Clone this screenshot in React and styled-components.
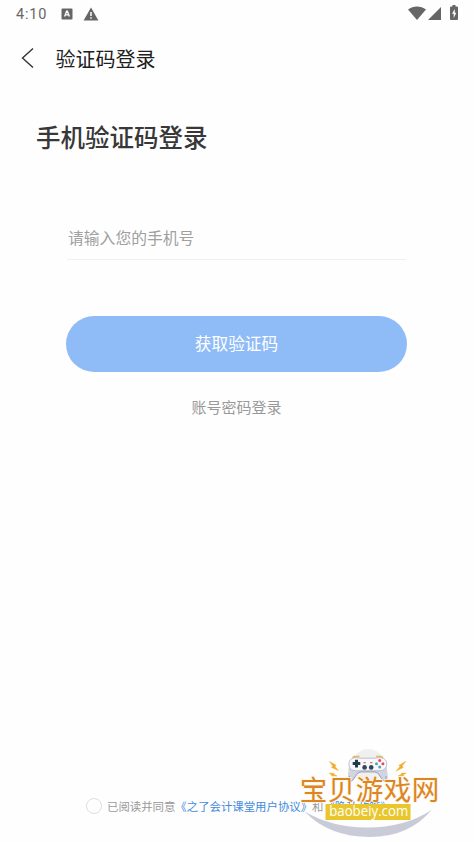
import React from "react";
import styled, { createGlobalStyle } from "styled-components";

const GlobalStyle = createGlobalStyle`
  * { box-sizing: border-box; }
  body { margin: 0; background: #fefefe; }
  button { border: 0; padding: 0; background: none; font: inherit; color: inherit; }
`;

const Screen = styled.div`
  position: relative;
  display: flex;
  flex-direction: column;
  width: 474px;
  height: 842px;
  overflow: hidden;
  background: #fefefe;
  font-family: "Noto Sans CJK SC", sans-serif;
`;

const StatusBar = styled.header`
  display: flex;
  justify-content: space-between;
  height: 28px;
  padding: 0 16px;
  color: #666;
`;

const StatusGroup = styled.div`
  display: flex;
  align-items: center;
  height: 28px;
`;

const Clock = styled.span`
  width: 45px;
  padding-top: 2px;
  font: 400 14.5px/28px Roboto, sans-serif;
  letter-spacing: 0.8px;
  color: #666;
`;

const NavBar = styled.nav`
  display: flex;
  align-items: center;
  gap: 19.5px;
  height: 60px;
  padding-left: 20px;
`;

const BackButton = styled.button`
  display: flex;
`;

const NavTitle = styled.span`
  padding-top: 2px;
  font-size: 20px;
  line-height: 30px;
  color: #202020;
`;

const Heading = styled.h1`
  margin: 31px 0 0 36px;
  font-size: 24.5px;
  line-height: 36px;
  font-weight: 500;
  color: #383838;
`;

const Form = styled.main`
  display: flex;
  flex-direction: column;
  align-items: center;
  margin: 61px 67px 0 66px;
`;

const PhoneField = styled.label`
  width: 339px;
  height: 44px;
  padding-left: 1px;
  border-bottom: 1px solid #f0f0f0;
  font-size: 15.8px;
  line-height: 43px;
  color: #a0a0a0;
`;

const SubmitButton = styled.button`
  width: 341px;
  height: 56px;
  margin-top: 56px;
  border-radius: 28px;
  background: #8fbcf7;
  font-size: 16.7px;
  line-height: 54px;
  padding-bottom: 2px;
  color: #fff;
`;

const PasswordLogin = styled.button`
  margin-top: 23px;
  font-size: 15px;
  line-height: 24px;
  color: #999;
`;

const Agreement = styled.footer`
  display: flex;
  align-items: center;
  height: 20px;
  margin: auto 0 26px 86px;
  font-size: 11.4px;
  line-height: 20px;
  white-space: nowrap;
  color: #999;
`;

const Radio = styled.span`
  width: 16px;
  height: 16px;
  margin-right: 5px;
  border: 1px solid #dedede;
  border-radius: 50%;
`;

const PolicyLink = styled.span`
  color: #438bdb;
`;

const SiteBadge = styled.svg`
  position: absolute;
  left: 290px;
  top: 740px;
`;

const LetterIcon = () => (
  <svg width="12" height="12" viewBox="0 0 12 12">
    <rect x="0.5" y="0.5" width="11" height="11" rx="1" fill="#666" />
    <path d="M3.6 8.5 5.6 3.2h.8l2 5.3M4.4 6.8h3.2" fill="none" stroke="#fff" strokeWidth="1.3" />
  </svg>
);

const WarningIcon = () => (
  <svg width="16" height="14" viewBox="0 0 16 14">
    <path d="M8 0.5 15.4 13.5H0.6Z" fill="#666" />
    <path d="M8 5v4M8 10.3v1.5" stroke="#fff" strokeWidth="1.5" />
  </svg>
);

const WifiIcon = () => (
  <svg width="18" height="14" viewBox="0 0 18 14">
    <path d="M0 3.6C5.2-.6 12.8-.6 18 3.6L9 14Z" fill="#666" />
  </svg>
);

const SignalIcon = () => (
  <svg width="13" height="13" viewBox="0 0 13 13">
    <path d="M13 0v13H0Z" fill="#666" />
  </svg>
);

const BatteryIcon = () => (
  <svg width="8" height="15" viewBox="0 0 8 15">
    <path d="M2.5 0h3v1.5H7q1 0 1 1V14q0 1-1 1H1q-1 0-1-1V2.5q0-1 1-1h1.5Z" fill="#666" />
    <path d="M4.8 4 2 8.8h1.7V13L6.3 7.8H4.8Z" fill="#fff" />
  </svg>
);

const Controller = () => (
  <g>
    <circle cx="78.3" cy="25.4" r="16.5" fill="#f0f0ef" />
    <path d="M62.5 17.8 64.5 16.5H69.5M86 16.5H91L93 17.8" fill="none" stroke="#e5b957" strokeWidth="1.7" />
    <path
      d="M60 22Q58.2 29 57.8 37Q58 42.2 60.8 42Q64 40.5 66 36Q67.5 32.5 71 32.3H84.6Q88 32.5 89.6 36Q91.6 40.5 94.8 42Q97.6 42.2 97.8 37Q97.4 29 95.6 22Z"
      fill="#d2d4df"
    />
    <path d="M59.5 36Q59 40.5 61 41.2Q64 40 65.5 36Q67.5 32 71 31.9H84.6Q88 32 90 36Q91.6 40 94.6 41.2Q96.6 40.5 96.1 36" fill="none" stroke="#9498b1" strokeWidth="0.9" />
    <path
      d="M64 17.8Q66.5 17.4 70 18.2H85.6Q89 17.4 91.6 17.8Q96.8 19 96.8 24.2Q96.5 30.3 90 30.7H65.6Q59.1 30.3 58.8 24.2Q58.8 19 64 17.8Z"
      fill="#f8f8fc"
      stroke="#a9adbf"
      strokeWidth="0.7"
    />
    <path d="M66.5 19.8v7.6M62.7 23.6h7.6" stroke="#203c4b" strokeWidth="3" />
    <circle cx="74.6" cy="27.4" r="2.3" fill="#31465a" />
    <circle cx="81.2" cy="27.4" r="2.3" fill="#31465a" />
    <path d="M73.4 22.7h2.5M80 22.7h2.5" stroke="#d44b58" strokeWidth="1.1" />
    <circle cx="89.7" cy="20.5" r="1.5" fill="#e94855" />
    <circle cx="92.9" cy="23.7" r="1.5" fill="#e94855" />
    <circle cx="89.7" cy="26.9" r="1.5" fill="#46a7bd" />
    <circle cx="86.5" cy="23.7" r="1.5" fill="#46a7bd" />
  </g>
);

const Sparks = () => (
  <g fill="#f2ac2d" stroke="#f2ac2d" strokeWidth="0.5">
    <path d="M39.5 21.5 46 25.3 45 26.6 48.5 30.6 41.5 27.4 42.7 26Z" />
    <path d="M39 33.3 43.7 33.2 43.9 34.3 47 36 41.4 35.8 41.6 34.8Z" />
    <path d="M115.7 21.3 108.8 25.5 110 26.6 106 31 113.3 27.4 112.1 26.1Z" />
    <path d="M116.2 33.2 111.5 33.1 111.3 34.2 108 36 113.6 35.7 113.4 34.7Z" />
  </g>
);

const Watermark = () => (
  <SiteBadge width="160" height="102" viewBox="0 0 160 102">
    <Controller />
    <Sparks />
    <path d="M14.5 71.5Q42 87.5 77 87.5Q115 87.5 141.5 70Q119 97 80 97Q39 97 14.5 71.5Z" fill="#c9cbd9" />
    <text
      x="9.8"
      y="60.3"
      textLength="139.5"
      fontFamily="Noto Sans CJK SC, sans-serif"
      fontSize="27.5"
      fontWeight="400"
      fill="#dc8523"
      stroke="#fff6e6"
      strokeWidth="1.5"
      paintOrder="stroke"
    >
      宝贝游戏网
    </text>
    <rect x="35.5" y="64" width="85" height="16" fill="#e8c62c" />
    <text
      x="39.2"
      y="76.3"
      textLength="79"
      lengthAdjust="spacingAndGlyphs"
      fontFamily="Open Sans, sans-serif"
      fontSize="15"
      fontWeight="500"
      fill="#fff"
    >
      baobeiy.com
    </text>
  </SiteBadge>
);

const StatusIconSlot = styled.span`
  display: flex;
  margin-left: ${({ $gap }) => $gap}px;
  margin-top: ${({ $drop }) => $drop || 0}px;
`;

export default function App() {
  return (
    <Screen>
      <GlobalStyle />
      <StatusBar>
        <StatusGroup>
          <Clock>4:10</Clock>
          <StatusIconSlot $gap={0}><LetterIcon /></StatusIconSlot>
          <StatusIconSlot $gap={10}><WarningIcon /></StatusIconSlot>
        </StatusGroup>
        <StatusGroup>
          <StatusIconSlot $gap={0} $drop={-2}><WifiIcon /></StatusIconSlot>
          <StatusIconSlot $gap={2} $drop={-2}><SignalIcon /></StatusIconSlot>
          <StatusIconSlot $gap={9} $drop={-3}><BatteryIcon /></StatusIconSlot>
        </StatusGroup>
      </StatusBar>
      <NavBar>
        <BackButton aria-label="返回">
          <svg width="16" height="22" viewBox="0 0 16 22">
            <path d="M13 1.5 2.5 11 13 20.5" fill="none" stroke="#333" strokeWidth="1.4" />
          </svg>
        </BackButton>
        <NavTitle>验证码登录</NavTitle>
      </NavBar>
      <Heading>手机验证码登录</Heading>
      <Form>
        <PhoneField>请输入您的手机号</PhoneField>
        <SubmitButton>获取验证码</SubmitButton>
        <PasswordLogin>账号密码登录</PasswordLogin>
      </Form>
      <Agreement>
        <Radio />
        已阅读并同意
        <PolicyLink>《之了会计课堂用户协议》</PolicyLink>
        和
        <PolicyLink>《隐私政策》</PolicyLink>
      </Agreement>
      <Watermark />
    </Screen>
  );
}
